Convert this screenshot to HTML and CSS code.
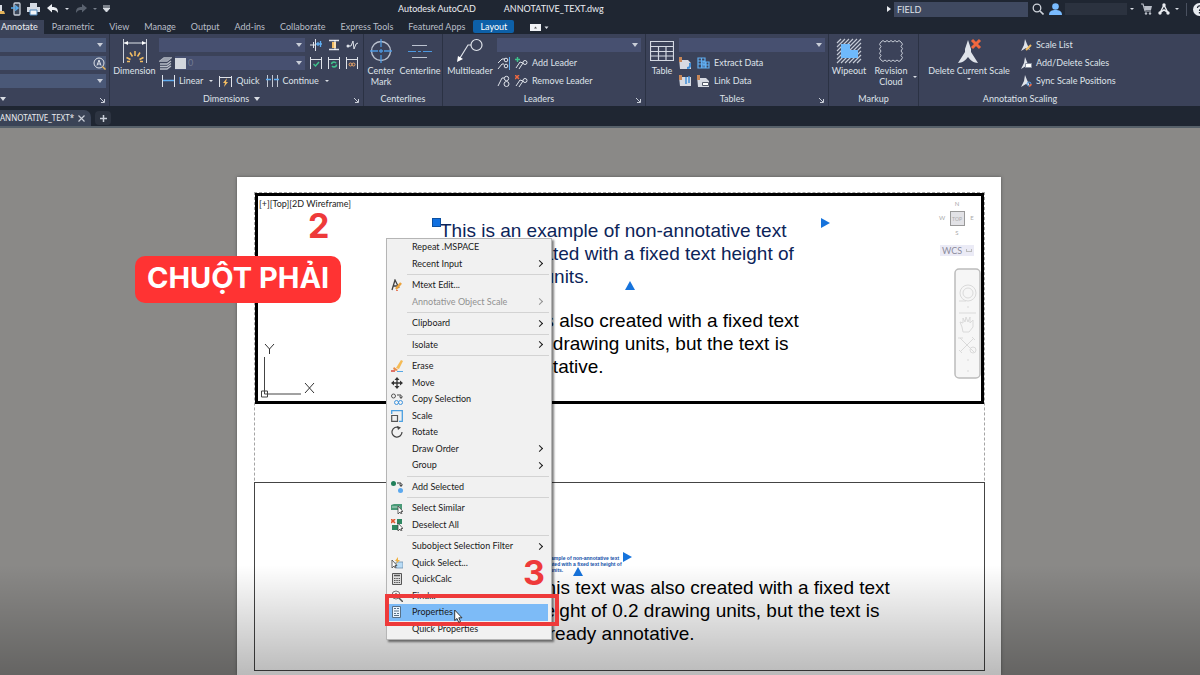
FILE: index.html
```html
<!DOCTYPE html>
<html lang="en">
<head>
<meta charset="utf-8">
<title>Autodesk AutoCAD - ANNOTATIVE_TEXT.dwg</title>
<link rel="stylesheet" href="styles.css">
</head>
<body>
<header class="titlebar">
  <div class="quick">
    <svg class="quick-cut" width="5" height="14" viewBox="0 0 5 14"><path d="M0 3h2v6H0z" fill="#d9dde4"/><path d="M0 9h4l1 3H0z" fill="#e5b45a"/></svg>
    <svg width="12" height="14" viewBox="0 0 12 14"><rect x="3" y="1" width="6" height="12" rx="1" fill="#3b4657" stroke="#c8ced8" stroke-width="1.300"/><path d="M0 6h6M4 3.500 7 6 4 8.500" fill="none" stroke="#58a9e8" stroke-width="1.600"/></svg>
    <svg width="13" height="14" viewBox="0 0 13 14"><path d="M3 1h7v4H3zM0 5h13v5H0z" fill="#d4dae3"/><path d="M3 8h7v5H3z" fill="#f3f5f8" stroke="#4b84b8"/></svg>
    <svg class="undo" width="12" height="12" viewBox="0 0 12 12"><path d="M0 5 5 1v3c5 0 6 2 6 6C9.500 7.500 8 7 5 7v2.500z" fill="#eef1f5"/></svg>
    <i class="dot"></i>
    <svg class="redo" width="12" height="12" viewBox="0 0 12 12"><path d="M12 5 7 1v3C2 4 1 6 1 10c1.500-2.500 3-3 6-3v2.500z" fill="#5a626f"/></svg>
    <i class="dot dim"></i>
    <svg width="7" height="8" viewBox="0 0 7 8"><path d="M0 1h7M0 3h7l-3.500 4z" stroke="#d9dde4" fill="#d9dde4"/></svg>
  </div>
  <div class="titles"><span>Autodesk AutoCAD</span><span>ANNOTATIVE_TEXT.dwg</span></div>
  <div class="account">
    <svg width="4" height="6" viewBox="0 0 4 6"><path d="M0 0l4 3-4 3z" fill="#e8ebf0"/></svg>
    <input class="search" type="text" value="FIELD" aria-label="Search">
    <svg width="12" height="12" viewBox="0 0 12 12"><circle cx="5" cy="5" r="3.800" fill="none" stroke="#cfd4dc" stroke-width="1.300"/><path d="M8 8l3.500 3.500" stroke="#cfd4dc" stroke-width="1.600"/></svg>
    <svg class="user" width="13" height="12" viewBox="0 0 13 12"><circle cx="6.500" cy="3.500" r="3.300" fill="#79bbff"/><path d="M0 12c0-4 3-5 6.500-5s6.500 1 6.500 5z" fill="#79bbff"/></svg>
    <span class="redacted"></span>
    <i class="dot"></i>
    <svg class="cart" width="12" height="12" viewBox="0 0 12 12"><path d="M0 1h2l2 7h6" fill="none" stroke="#b9bec8" stroke-width="1.200"/><path d="M3 3h8l-1 4H4z" fill="#b9bec8"/><circle cx="5" cy="10.500" r="1.200" fill="#b9bec8"/><circle cx="9" cy="10.500" r="1.200" fill="#b9bec8"/></svg>
    <svg class="apps" width="12" height="12" viewBox="0 0 12 12"><path d="M6 2 2 10M6 2l4 8M3 9l3-2 3 2" fill="none" stroke="#e8ebf0" stroke-width="1.500"/><circle cx="6" cy="2" r="1.700" fill="#e8ebf0"/><circle cx="2" cy="10" r="1.700" fill="#e8ebf0"/><circle cx="10" cy="10" r="1.700" fill="#e8ebf0"/></svg>
    <i class="dot"></i>
    <span class="rule"></span>
    <svg width="13" height="13" viewBox="0 0 13 13"><circle cx="6.500" cy="6.500" r="6.500" fill="#e8ebf0"/><path d="M4.500 5c0-3 4-2.500 4-.3 0 1.500-2 1.500-2 3.300M6.500 9v1.500" fill="none" stroke="#1f2632" stroke-width="1.300"/></svg>
  </div>
</header>

<nav class="tabs">
  <button class="tab current">Annotate</button><button class="tab">Parametric</button><button class="tab">View</button><button class="tab">Manage</button><button class="tab">Output</button><button class="tab">Add-ins</button><button class="tab">Collaborate</button><button class="tab">Express Tools</button><button class="tab">Featured Apps</button><button class="tab layout">Layout</button>
  <svg width="19" height="7" viewBox="0 0 19 7"><rect width="11" height="7" fill="#f1f3f6"/><path d="M4 4.500h3L5.500 2.500z" fill="#555"/><path d="M14.500 2.500h4l-2 2.500z" fill="#d9dde4"/></svg>
</nav>

<section class="ribbon">
  <div class="panel p-text">
    <div class="body stack">
      <label class="combo bright"><select aria-label="Text style"><option></option></select></label>
      <label class="combo bright find"><input type="text" aria-label="Find text"><svg width="13" height="13" viewBox="0 0 13 13"><circle cx="6" cy="6" r="5" fill="none" stroke="#dfe3ea"/><path d="M4 8.500 6 3l2 5.500M4.600 7h2.800" fill="none" stroke="#dfe3ea"/><path d="M9.500 9.500 12.500 12.500" stroke="#e5b45a" stroke-width="1.500"/></svg></label>
      <label class="combo bright"><select aria-label="Text height"><option></option></select></label>
    </div>
    <div class="caption"><i class="tri"></i></div>
    <svg class="launch" viewBox="0 0 5 5"><path d="M0 0l4 4M4.500 1v3.500H1" fill="none" stroke="#c9ced8"/></svg>
  </div>

  <div class="panel p-dim">
    <div class="body">
      <button class="big w-dim"><svg width="26" height="26" viewBox="0 0 26 26"><path d="M1.500 1v24M24.500 1v24" stroke="#cdd2dc"/><path d="M2 5h22" stroke="#dfe3ea"/><path d="M2 5l4-2v4zM24 5l-4-2v4z" fill="#fff"/><path d="M13 13v5M8 14.500l2.500 4M18 14.500l-2.500 4M4.500 19.500l4 2M21.500 19.500l-4 2M5 23.500h3M18 23.500h3" stroke="#f3bd62" stroke-width="1.500"/></svg>Dimension</button>
      <div class="stack grow">
        <div class="row"><label class="combo grow"><select aria-label="Dimension style"><option></option></select></label></div>
        <div class="row layers"><svg width="13" height="13" viewBox="0 0 13 13"><path d="M1 4 5 1h7L8 4zM1 7l7 0 4-3M1 9.500h7l4-3M1 12h7l4-3" fill="none" stroke="#b9bec8" stroke-width="1.300"/><path d="M1 4 5 1h7L8 4z" fill="#9ba1ae"/></svg><label class="combo grow layer"><span class="swatch"></span><select aria-label="Dimension layer"><option>0</option></select></label></div>
        <div class="row cmds">
          <button class="cmd"><svg width="13" height="12" viewBox="0 0 13 12"><path d="M.5 0v12M12.500 0v12" stroke="#dfe3ea"/><path d="M1 5.500h11" stroke="#60aef2" stroke-width="1.500"/></svg>Linear</button><i class="dot"></i>
          <button class="cmd"><svg width="13" height="12" viewBox="0 0 13 12"><path d="M.5 1v11M12.500 1v11M1 2.500h11" stroke="#dfe3ea" fill="none"/><path d="M8 3 4 8h2l-1 4 4-5H7z" fill="#f3bd62"/></svg>Quick</button>
          <button class="cmd"><svg width="13" height="12" viewBox="0 0 13 12"><path d="M1.500 0v12M6.500 0v12M11.500 0v12" stroke="#c2c8d3"/><path d="M0 4.500h5M8 4.500h5" stroke="#60aef2" stroke-width="1.400"/></svg>Continue</button><i class="dot"></i>
        </div>
      </div>
      <div class="icons">
        <svg viewBox="0 0 12 12"><path d="M0 6h5M3.500 3v6M5.500 0v12" stroke="#dfe3ea"/><path d="M6 5h6M8 3v4M10.500 2v6" stroke="#60aef2" stroke-width="1.300"/></svg>
        <svg viewBox="0 0 12 12"><path d="M1 1.500h10M1 10.500h10" stroke="#dfe3ea" stroke-width="1.300"/><path d="M4 3h4v6H4z" fill="#f3bd62"/><path d="M7 1v10" stroke="#fff"/></svg>
        <svg viewBox="0 0 12 12"><circle cx="2" cy="7" r="1.500" fill="#dfe3ea"/><path d="M2 7h3l2-5 1 8 2-5 2-1" fill="none" stroke="#dfe3ea"/></svg>
        <svg viewBox="0 0 12 12"><path d="M.5 0v12M11.500 0v12M1 2.500h10" stroke="#dfe3ea"/><path d="M3.500 7l2 2 3.500-4" fill="none" stroke="#3fc48d" stroke-width="1.400"/></svg>
        <svg viewBox="0 0 12 12"><path d="M.5 0v12M11.500 0v12M1 2.500h10" stroke="#dfe3ea"/><circle cx="6" cy="7.500" r="2.500" fill="none" stroke="#3fc48d" stroke-width="1.400" stroke-dasharray="6 2"/></svg>
        <svg viewBox="0 0 12 12"><path d="M.5 0v12M11.500 0v12M1 2.500h10" stroke="#dfe3ea"/><circle cx="4.500" cy="7.500" r="1.500" fill="none" stroke="#f0a868"/><circle cx="7.500" cy="7.500" r="1.500" fill="none" stroke="#f0a868"/></svg>
      </div>
    </div>
    <div class="caption">Dimensions<i class="tri"></i></div>
    <svg class="launch" viewBox="0 0 5 5"><path d="M0 0l4 4M4.500 1v3.500H1" fill="none" stroke="#c9ced8"/></svg>
  </div>

  <div class="panel p-center">
    <div class="body">
      <button class="big w-mark"><svg width="24" height="26" viewBox="0 0 24 26"><circle cx="12" cy="13" r="9.500" fill="none" stroke="#bcc3d0" stroke-width="1.300"/><path d="M12 1v8M12 17v8M1 13h8M15 13h8M12 11v4M10 13h4" stroke="#4d98df" stroke-width="1.300"/></svg>Center<br>Mark</button>
      <button class="big w-line"><svg width="24" height="26" viewBox="0 0 24 26"><path d="M4 7.500h15M4 19.500h15" stroke="#bcc3d0"/><path d="M0 13.500h8M10 13.500h3M15 13.500h9" stroke="#4d98df"/></svg>Centerline</button>
    </div>
    <div class="caption">Centerlines</div>
  </div>

  <div class="panel p-lead">
    <div class="body">
      <button class="big w-multi"><svg width="26" height="26" viewBox="0 0 26 26"><circle cx="19.500" cy="7" r="5.500" fill="none" stroke="#dfe3ea" stroke-width="1.200"/><path d="M14 7h-3L3 20" fill="none" stroke="#dfe3ea" stroke-width="1.200"/><path d="M0 24l1-6 5 3z" fill="#fff"/></svg>Multileader</button>
      <div class="stack grow">
        <div class="row"><label class="combo grow"><select aria-label="Leader style"><option></option></select></label></div>
        <div class="row"><svg width="14" height="13" viewBox="0 0 14 13"><path d="M1 6l4-4h3M1 12l4-5h2" fill="none" stroke="#dfe3ea"/><circle cx="9" cy="3" r="1.800" fill="none" stroke="#dfe3ea"/><circle cx="9" cy="9" r="1.800" fill="none" stroke="#dfe3ea"/><path d="M12.500 0v13" stroke="#60aef2"/></svg><button class="cmd"><svg width="13" height="12" viewBox="0 0 13 12"><path d="M1 11l4-6 3 1M4 12l4-6" fill="none" stroke="#dfe3ea"/><circle cx="10" cy="5.500" r="2" fill="none" stroke="#dfe3ea"/><path d="M0 2.500h5M2.500 0v5" stroke="#3fc48d" stroke-width="1.400"/></svg>Add Leader</button></div>
        <div class="row"><svg width="14" height="13" viewBox="0 0 14 13"><path d="M1 11l4-8h2" fill="none" stroke="#dfe3ea"/><circle cx="9.500" cy="3.500" r="2.200" fill="none" stroke="#dfe3ea"/><circle cx="9.500" cy="9" r="2.500" fill="none" stroke="#dfe3ea"/></svg><button class="cmd"><svg width="13" height="12" viewBox="0 0 13 12"><path d="M1 11l4-6 3 1M4 12l4-6" fill="none" stroke="#dfe3ea"/><circle cx="10" cy="5.500" r="2" fill="none" stroke="#dfe3ea"/><path d="M0 0l4 4M4 0 0 4" stroke="#f0683f" stroke-width="1.500"/></svg>Remove Leader</button></div>
      </div>
    </div>
    <div class="caption">Leaders</div>
    <svg class="launch" viewBox="0 0 5 5"><path d="M0 0l4 4M4.500 1v3.500H1" fill="none" stroke="#c9ced8"/></svg>
  </div>

  <div class="panel p-table">
    <div class="body">
      <button class="big w-table"><svg width="24" height="26" viewBox="0 0 24 26"><path d="M.5 3.500h23v19H.5zM1 8.500h22M1 13.500h22M1 18h22M8.500 8v15M16 8v15" fill="none" stroke="#d3d8e1" stroke-width="1.200"/></svg>Table</button>
      <div class="stack grow">
        <div class="row"><label class="combo grow"><select aria-label="Table style"><option></option></select></label></div>
        <div class="row"><svg width="14" height="12" viewBox="0 0 14 12"><path d="M0 1h3v2h6l3 3v6H1z" fill="#d6dae2"/><path d="M0 0h3v5H0z" fill="#c88758"/><path d="M8 11c4 0 3-3 3-5" fill="none" stroke="#3f8ed8" stroke-width="2"/></svg><button class="cmd"><svg width="13" height="12" viewBox="0 0 13 12"><path d="M1 1h7v10H1zM1 4h7M1 7h7M4.500 1v10M6 5h6v6H6zM6 8h6M9 5v6" fill="none" stroke="#60aef2" stroke-width="1.200"/></svg>Extract Data</button></div>
        <div class="row"><svg width="14" height="12" viewBox="0 0 14 12"><path d="M0 2h12v9H1z" fill="#d6dae2"/><path d="M0 0h3v5H0z" fill="#c88758"/><path d="M7 2v7M10 1v7" stroke="#3f8ed8" stroke-width="1.500"/></svg><button class="cmd"><svg width="13" height="12" viewBox="0 0 13 12"><path d="M0 1h3v2h6l3 3v6H1z" fill="#d6dae2"/><path d="M0 0h3v5H0z" fill="#c88758"/><path d="M5.500 7.500h6v3h-6z" fill="#fff" stroke="#555c6b"/></svg>Link Data</button></div>
      </div>
    </div>
    <div class="caption">Tables</div>
    <svg class="launch" viewBox="0 0 5 5"><path d="M0 0l4 4M4.500 1v3.500H1" fill="none" stroke="#c9ced8"/></svg>
  </div>

  <div class="panel p-mark">
    <div class="body">
      <button class="big w-wipe"><svg width="26" height="26" viewBox="0 0 26 26"><path d="M1 5l4-4M1 9l8-8M1 13 13 1M1 17 17 1M1 21 21 1M1 25 25 1M5 25 25 5M9 25 25 9M13 25l12-12M17 25l8-8M21 25l4-4" stroke="#c5cad5" stroke-width="1.200"/><path d="M5 6h9v6h8v8H5z" fill="#6fb9fb"/></svg>Wipeout</button>
      <button class="big w-cloud"><svg width="26" height="26" viewBox="0 0 26 26"><path d="M3 4q2-3 4 0q2-3 4 0q2-3 4 0q2-3 4 0q2-3 4 0q3 2 0 4.500q3 2 0 4.500q3 2 0 4.500q3 2 0 4.500q-2 3-4 0q-2 3-4 0q-2 3-4 0q-2 3-4 0q-2 3-4 0q-3-2 0-4.500q-3-2 0-4.500q-3-2 0-4.500q-3-2 0-4.500z" fill="none" stroke="#c5cad5"/></svg>Revision<br>Cloud</button><i class="dot"></i>
    </div>
    <div class="caption">Markup</div>
  </div>

  <div class="panel p-scale">
    <div class="body">
      <button class="big w-del"><svg width="26" height="26" viewBox="0 0 26 26"><path d="M12 2l3 9v3l7 11c-4 0-8-3-10-6-2 3-6 6-10 6l7-11v-3z" fill="#dfe3ea"/><path d="M16 2l8 8M24 2l-8 8" stroke="#f0683f" stroke-width="3"/></svg>Delete Current Scale<i class="dot"></i></button>
      <div class="stack">
        <div class="row"><button class="cmd"><svg width="12" height="12" viewBox="0 0 12 12"><path d="M5 0l2 5 3 6-4-2-5 3 3-6z" fill="#dfe3ea"/><path d="M6 11l5-5" stroke="#f3bd62" stroke-width="2"/></svg>Scale List</button></div>
        <div class="row"><button class="cmd"><svg width="12" height="12" viewBox="0 0 12 12"><path d="M5 0l2 5 3 6-4-2-5 3 3-6z" fill="#dfe3ea"/><path d="M5.500 6.500h6v4h-6z" fill="#fff" stroke="#8990a0"/></svg>Add/Delete Scales</button></div>
        <div class="row"><button class="cmd"><svg width="12" height="12" viewBox="0 0 12 12"><path d="M5 0l2 5 3 6-4-2-5 3 3-6z" fill="#dfe3ea"/><circle cx="9" cy="9" r="2" fill="none" stroke="#5c9fe0"/><path d="M9 11a2 2 0 0 0 2-2" fill="none" stroke="#f0683f" stroke-width="1.400"/></svg>Sync Scale Positions</button></div>
      </div>
    </div>
    <div class="caption">Annotation Scaling</div>
  </div>
</section>

<nav class="files">
  <div class="file"><span>ANNOTATIVE_TEXT*</span><button class="close" aria-label="Close"><svg width="7" height="7" viewBox="0 0 7 7"><path d="M.5.5l6 6M6.500.5l-6 6" stroke="#c9ced8" stroke-width="1.200"/></svg></button></div>
  <button class="new" aria-label="New drawing"><svg width="7" height="7" viewBox="0 0 7 7"><path d="M3.500 0v7M0 3.500h7" stroke="#c9ced8" stroke-width="1.500"/></svg></button>
</nav>

<main class="canvas">
  <div class="paper">
    <div class="printable">
      <section class="view active">
        <div class="view-label">[+][Top][2D Wireframe]</div>
        <svg class="ucs" width="58" height="58" viewBox="0 0 58 58" fill="none" stroke="#555"><path d="M5.500 17v37H42M2.500 51h6v6h-6z" stroke="#444"/><path d="M6 4l4.500 5L15 4M10.500 9v5M46 43l9 10M55 43l-9 10" stroke="#333"/></svg>
        <div class="cube">
          <span class="n">N</span><span>W</span><span class="top">TOP</span><span>E</span><span class="s">S</span>
        </div>
        <div class="wcs">WCS <i></i></div>
        <svg class="navbar" width="27" height="111" viewBox="0 0 27 111" fill="none" stroke="#dadada"><rect x="1" y="1" width="25" height="109" rx="4" fill="#f6f6f6" stroke="#bcbcbc" stroke-width="1.500"/><circle cx="14" cy="25" r="8"/><circle cx="14" cy="25" r="5"/><path d="M5 33h7M13 39h2M5 45h17"/><path d="M8 59l-2-5 3 1v-5l2 4 1-5 2 5 2-5v6l3-3v7l-4 5h-6zM6 70l14 14M20 70 6 84M4 70h5M18 69l3 3M5 82l3 3"/><circle cx="19" cy="82" r="3"/><path d="M13 92h2M13 103h2"/></svg>
      </section>
      <section class="view second"></section>
    </div>
  </div>

  <p class="mtext selected t1">This is an example of non-annotative text<br>that was created with a fixed text height of<br>0.2 drawing units.</p>
  <i class="grip square g1"></i><i class="grip right g2"></i><i class="grip up g3"></i>
  <p class="mtext t2">This text was also created with a fixed text<br>height of 0.2 drawing units, but the text is<br>already annotative.</p>
  <p class="mtext tiny t3">This is an example of non-annotative text<br>that was created with a fixed text height of<br>0.2 drawing units.</p>
  <i class="grip right g4"></i><i class="grip up g5"></i>
  <p class="mtext t4">This text was also created with a fixed text<br>height of 0.2 drawing units, but the text is<br>already annotative.</p>
  <div class="shade"></div>

  <div class="menu" role="menu">
    <button class="item">Repeat .MSPACE</button>
    <button class="item sub">Recent Input</button>
    <hr>
    <button class="item"><svg viewBox="0 0 12 12"><path d="M1 11 4 1l4 8M2 7h5" fill="none" stroke="#444" stroke-width="1.300"/><path d="M5 10l5-6" stroke="#eba33d" stroke-width="2.500"/><path d="M5 11l2 1" stroke="#e0562f"/></svg>Mtext Edit...</button>
    <button class="item sub" disabled>Annotative Object Scale</button>
    <hr>
    <button class="item sub">Clipboard</button>
    <hr>
    <button class="item sub">Isolate</button>
    <hr>
    <button class="item"><svg viewBox="0 0 12 12"><path d="M5 8l5-8 2 1-4 8z" fill="#f5bb55"/><path d="M3 7l4 3-2 1-3-2z" fill="#e98c46"/><path d="M0 11h4" stroke="#d9483b" stroke-width="1.500"/><path d="M6 11.500h6" stroke="#55a7e4"/></svg>Erase</button>
    <button class="item"><svg viewBox="0 0 12 12"><path d="M6 2v8M2 6h8" stroke="#333" stroke-width="1.300"/><path d="M6 0l2.500 3h-5zM6 12l2.500-3h-5zM0 6l3-2.500v5zM12 6 9 3.500v5z" fill="#333"/></svg>Move</button>
    <button class="item"><svg viewBox="0 0 12 12"><circle cx="2.500" cy="3" r="2" fill="none" stroke="#555"/><path d="M6 2h4v3M8.500 3.500 10 5.500l1.500-2" fill="none" stroke="#444"/><circle cx="5.500" cy="9.500" r="2" fill="none" stroke="#3f94dd"/><circle cx="9.500" cy="9.500" r="2" fill="none" stroke="#3f94dd"/></svg>Copy Selection</button>
    <button class="item"><svg viewBox="0 0 12 12"><path d="M.7 4V.7h10.600v10.600H8" fill="none" stroke="#4b9fe0" stroke-width="1.300"/><path d="M.7 5.500h5.800v5.800H.7z" fill="none" stroke="#555" stroke-width="1.200"/></svg>Scale</button>
    <button class="item"><svg viewBox="0 0 12 12"><path d="M8 1.500a5 5 0 1 0 3 4.500" fill="none" stroke="#444" stroke-width="1.200"/><path d="M6 0l4 1.500L7 4z" fill="#444"/></svg>Rotate</button>
    <button class="item sub">Draw Order</button>
    <button class="item sub">Group</button>
    <hr>
    <button class="item"><svg viewBox="0 0 12 12"><circle cx="2.500" cy="2.500" r="2.500" fill="#21805b"/><circle cx="9.500" cy="9.500" r="2.500" fill="#5ba8ee"/><path d="M6 2h4v3M8.500 3.500 10 5.500l1.500-2" fill="none" stroke="#333"/></svg>Add Selected</button>
    <hr>
    <button class="item"><svg viewBox="0 0 12 12"><path d="M0 3l3-1h8v6H0z" fill="#4a9a78"/><path d="M1 5h8" stroke="#bfe0d0"/><path d="M7 4v8l2-2 1 2 1-.5-1-2h2z" fill="#fff" stroke="#444" stroke-width=".8"/></svg>Select Similar</button>
    <button class="item"><svg viewBox="0 0 12 12"><path d="M6 0h5v5H6zM1 6h5v5H1zM6 6h3v5H6z" fill="#2f8761"/><path d="M0 0l4 4M4 0 0 4" stroke="#e0562f" stroke-width="1.600"/><path d="M7 4v8l2-2 1 2 1-.5-1-2h2z" fill="#fff" stroke="#444" stroke-width=".8"/></svg>Deselect All</button>
    <hr>
    <button class="item sub">Subobject Selection Filter</button>
    <button class="item"><svg viewBox="0 0 12 12"><path d="M5 5h7v6H5z" fill="#b9dcf6" stroke="#6e8fae" stroke-width=".8"/><path d="M7 0 4 4h2l-1 3 4-4H7z" fill="#f0b03f"/><path d="M1 3v8l2-2 1 2 1-.5-1-2h2z" fill="#fff" stroke="#444" stroke-width=".8"/></svg>Quick Select...</button>
    <button class="item"><svg viewBox="0 0 12 12"><path d="M1.500.5h9v11h-9z" fill="#ddd" stroke="#555"/><path d="M3 2.500h6" stroke="#555" stroke-width="1.500"/><path d="M3 5.500h6M3 7.500h6M3 9.500h6" stroke="#555" stroke-dasharray="1.500 .8"/></svg>QuickCalc</button>
    <button class="item"><svg viewBox="0 0 12 12"><circle cx="5" cy="5" r="4" fill="none" stroke="#777"/><path d="M8 8l4 4" stroke="#555" stroke-width="1.500"/><path d="M3.500 7 5 3l1.500 4" fill="none" stroke="#777"/></svg>Find...</button>
    <button class="item hot"><svg viewBox="0 0 12 12"><path d="M1.500.5h8v11h-8z" fill="#eaf4fd" stroke="#587087"/><path d="M3 2.500h2M6 2.500h2M3 5h5M3 7.500h2M6 7.500h2M3 9.500h5" stroke="#587087"/></svg>Properties</button>
    <button class="item">Quick Properties</button>
  </div>

  <span class="step s2">2</span>
  <span class="step s3">3</span>
  <div class="callout">CHUỘT PHẢI</div>
  <div class="frame"></div>
  <svg class="pointer" width="9" height="14" viewBox="0 0 9 14"><path d="M.7 1v10.500l2.300-2 1.700 3.800 1.800-.8-1.700-3.700H8z" fill="#fff" stroke="#222" stroke-width=".9"/></svg>
</main>
</body>
</html>
```
FILE: styles.css
```css
* { box-sizing: border-box; }

body {
  margin: 0;
  min-height: 100vh;
  display: flex;
  flex-direction: column;
  overflow: hidden;
  background: #1f2632;
  color: #dfe2e9;
  font: 9px/12px Lato, "Open Sans", sans-serif;
}

button, input, select {
  margin: 0;
  padding: 0;
  border: 0;
  background: none;
  color: inherit;
  font: inherit;
}

svg { display: block; flex: none; }
p { margin: 0; }

.dot, .tri {
  flex: none;
  border: 2px solid transparent;
  border-top-color: #d9dde4;
  border-bottom: 0;
}
.tri { border-width: 4px 3px 0; }
.dot.dim { border-top-color: #777e8a; }

/* Title bar */
.titlebar { display: flex; align-items: center; height: 18px; overflow: hidden; }
.quick { display: flex; align-items: center; flex: none; width: 398px; }
.quick-cut { margin-right: 6px; }
.quick svg + svg { margin-right: 4px; }
.quick .undo { margin: 0 6px 0 3px; }
.quick .redo { margin: 0 6px; }
.quick .dim { margin-right: 6px; }
.titles { display: flex; gap: 28px; color: #eceef2; white-space: nowrap; }
.account { display: flex; align-items: center; margin: 0 -6px 0 auto; flex: none; }
.search { width: 134px; height: 15px; margin: 0 4px 0 3px; padding: 0 3px; background: #3f4960; }
.user { margin-left: 5px; }
.redacted { width: 62px; height: 12px; margin: 0 3px; background: #2b323f; }
.cart { margin-left: 7px; }
.apps { margin: 0 5px; }
.rule { width: 1px; height: 13px; margin: 0 6px 0 7px; background: #4a5160; }

/* Ribbon tabs */
.tabs { display: flex; align-items: flex-end; gap: 1px; height: 16px; color: #b9bec8; }
.tab { height: 14px; padding: 0 7px; white-space: nowrap; }
.tab.current { padding: 0 6px 0 1px; background: #3b4359; color: #eceef2; }
.tab.layout { height: 13px; margin: 0 15px 1px 0; border-radius: 2px; background: #0d60a8; color: #fff; }
.tabs svg { align-self: center; margin-top: 2px; }

/* Ribbon panels */
.ribbon { display: flex; height: 72px; background: #3b4259; }
.panel { position: relative; display: flex; flex-direction: column; flex: none; border-right: 1px solid #2b3244; padding-top: 2px; }
.p-text { width: 110px; }
.p-dim { width: 254px; }
.p-center { width: 79px; }
.p-lead { width: 203px; }
.p-table { width: 183px; }
.p-mark { width: 90px; }
.p-scale { flex: 1; border: 0; }
.body { display: flex; height: 54px; }
.stack { display: flex; flex-direction: column; }
.grow { flex: 1; min-width: 0; }
.row { display: flex; align-items: center; gap: 3px; height: 18px; }
.caption { display: flex; align-items: center; justify-content: center; gap: 5px; height: 16px; padding-top: 1px; }
.p-dim .caption, .p-lead .caption, .p-table .caption { padding-right: 10px; }
.p-text .caption { justify-content: flex-start; }
.p-scale .caption { width: 202px; }
.launch { position: absolute; right: 4px; bottom: 3px; width: 5px; height: 5px; }

.combo { position: relative; display: flex; align-items: center; height: 14px; background: #475070; }
.combo select, .combo input { appearance: none; width: 100%; height: 14px; outline: 0; }
.combo:has(select)::after { content: ""; position: absolute; right: 3px; border: 3px solid transparent; border-top: 4px solid #c9ced8; border-bottom: 0; pointer-events: none; }
.combo.bright { width: 106px; margin: 2px 0; background: #4a5877; }
.combo.layer { color: #737b92; }
.swatch { flex: none; width: 11px; height: 11px; margin: 0 2px 0 0; background: #d3d7de; }

.big { display: flex; flex-direction: column; align-items: center; align-self: flex-start; line-height: 11px; padding-top: 2px; white-space: nowrap; }
.big svg { margin-bottom: 1px; }
.big .dot { margin-top: 2px; }
.w-dim { width: 49px; }
.w-mark { width: 34px; }
.w-line { width: 44px; }
.w-multi { width: 52px; }
.w-table { width: 32px; }
.w-wipe { width: 40px; }
.w-cloud { width: 44px; }
.w-del { width: 100px; }
.p-mark .dot { align-self: flex-end; margin-bottom: 12px; }
.p-lead .combo { margin-right: 4px; }
.p-table .combo { margin: 0 3px 0 0; }
.p-lead .row, .p-table .row { gap: 4px; }
.p-table .body { gap: 1px; }
.p-lead .body { gap: 1px; padding-left: 1px; }
.cmd { display: flex; align-items: center; gap: 4px; white-space: nowrap; }
.cmds { gap: 6px; padding-left: 3px; }
.icons { display: grid; grid-template-columns: repeat(3, 12px); grid-template-rows: 18px 18px; align-items: center; gap: 0 6px; padding: 0 5px 0 5px; }
.icons svg { width: 12px; height: 12px; }
.p-scale .body { gap: 1px; }

/* Drawing tabs */
.files { display: flex; height: 22px; padding-top: 4px; gap: 4px; border-bottom: 2px solid #566069; }
.file { display: flex; align-items: center; gap: 4px; padding-right: 6px; background: #3a4356; border-radius: 0 7px 0 0; color: #eceef2; white-space: nowrap; font-family: "Noto Sans", sans-serif; font-size: 8px; }
.new { display: grid; place-items: center; width: 16px; height: 14px; margin-top: 1px; border-radius: 4px; background: #2d3441; }

/* Layout canvas */
.canvas { position: relative; display: grid; flex: 1; padding: 49px 199px 0 237px; overflow: hidden; background: #8a8987; }
.paper { display: grid; padding: 15px 16px 4px 17px; background: #fff; box-shadow: 0 0 3px #555; }
.printable { display: flex; flex-direction: column; gap: 78px; border: 1px dashed #a4a4a4; border-bottom: 0; }
.view.active { position: relative; height: 211px; flex: none; border: 3px solid #000; }
.view.second { flex: 1; margin: 0 -1px; border: 1px solid #444; }
.view-label { padding: 2px 1px; color: #222; }
.ucs { position: absolute; left: 1px; bottom: 3px; }
.cube { position: absolute; right: 2px; top: 2px; display: grid; grid-template: 12px 16px 14px / 14px 16px 14px; place-items: center; font-size: 6px; line-height: 8px; color: #aaa; }
.cube .n, .cube .s { grid-column: 1 / 4; }
.cube .top { width: 15px; height: 15px; padding-top: 3px; border: 1px solid #999; background: #e2e2e6; font-size: 5px; text-align: center; }
.wcs { position: absolute; right: 7px; top: 49px; display: flex; align-items: center; gap: 4px; width: 34px; height: 11px; padding-left: 2px; background: #ebebf6; color: #8c8c9c; }
.wcs i { width: 6px; height: 3px; border: 1px solid #bbb; border-top: 0; }
.navbar { position: absolute; right: 0; top: 72px; }

.mtext { position: absolute; color: #000; font: 19px/23px "Liberation Sans", Arial, sans-serif; white-space: nowrap; }
.mtext.selected { color: #0c2459; }
.mtext.tiny { color: #1450a8; font-size: 5px; line-height: 6px; font-weight: 700; }
.t1 { left: 440px; top: 91px; }
.t2 { left: 443px; top: 181px; }
.t3 { left: 521px; top: 427px; }
.t4 { left: 534px; top: 448px; }

.grip { position: absolute; }
.grip.square { width: 9px; height: 9px; background: #1170e0; border: 1px solid #0b4fa0; }
.grip.right { border: 5px solid transparent; border-left: 9px solid #1673dc; border-right: 0; }
.grip.up { border: 5px solid transparent; border-bottom: 9px solid #1673dc; border-top: 0; }
.g1 { left: 432px; top: 90px; }
.g2 { left: 821px; top: 90px; }
.g3 { left: 625px; top: 153px; }
.g4 { left: 623px; top: 424px; }
.g5 { left: 573px; top: 439px; }

.shade { position: absolute; inset: auto 0 0; height: 110px; background: linear-gradient(transparent, rgba(0, 0, 0, .27)); }

/* Shortcut menu */
.menu { position: absolute; left: 386px; top: 110px; display: flex; flex-direction: column; width: 166px; min-height: 402px; padding-bottom: 2px; border: 1px solid #b5b5b5; background: #f1f1f1; box-shadow: 2px 2px 2px rgba(0, 0, 0, .5); color: #1a1a1a; }
.item { position: relative; display: flex; align-items: center; flex: 1; padding-left: 25px; text-align: left; white-space: nowrap; }
.item svg { width: 12px; height: 12px; margin: 0 9px 0 -21px; }
.item:disabled { color: #929292; }
.item.hot { margin: 0 3px 0 1px; padding-left: 24px; background: #7dbbf7; }
.sub::after { content: ""; position: absolute; right: 9px; width: 4px; height: 4px; border: solid currentColor; border-width: 1px 1px 0 0; transform: rotate(45deg); }
.menu hr { flex: none; width: 142px; height: 1px; margin: 2px 2px 2px auto; border: 0; background: #d3d3d3; }

/* Tutorial marks */
.step { position: absolute; color: #ee3a3a; font: 700 34px/40px Inter, sans-serif; }
.s2 { left: 308px; top: 78px; }
.s3 { left: 523px; top: 425px; }
.callout { position: absolute; left: 135px; top: 128px; height: 47px; padding: 0 12px; border-radius: 10px; background: #ff3333; color: #fff; font: 700 29px/44px Inter, sans-serif; white-space: nowrap; }
.frame { position: absolute; left: 385px; top: 466px; width: 174px; height: 32px; border: 4px solid #ee3a3a; }
.pointer { position: absolute; left: 454px; top: 481px; }
```
